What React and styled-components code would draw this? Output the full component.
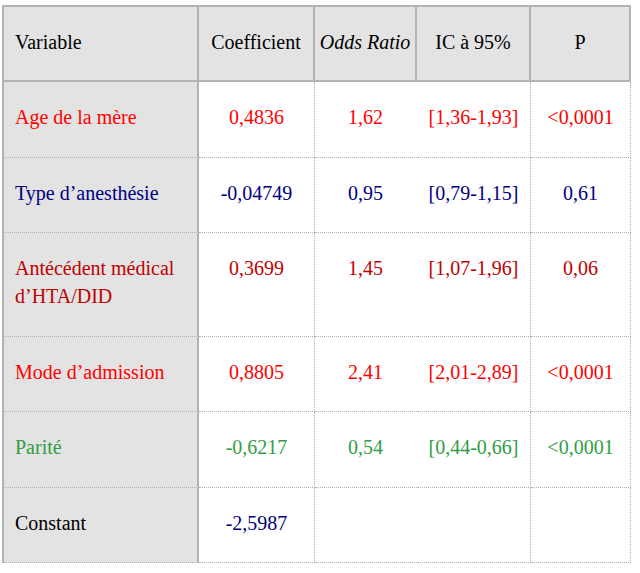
import React from "react";
import styled, { createGlobalStyle, css } from "styled-components";

const Global = createGlobalStyle`
  html, body { margin: 0; padding: 0; background: #ffffff; }
  body { font-family: "Liberation Serif", "Times New Roman", serif; }
`;

const Page = styled.div`
  padding: 5px 0 0 2px;
`;

const Table = styled.div`
  display: grid;
  grid-template-columns: 195px 116px 102px 114px 100px;
  width: max-content;
  border-top: 2px solid #b3b3b3;
  border-left: 2px solid #b3b3b3;
  font-family: "Liberation Serif", "Times New Roman", serif;
  font-size: 20px;
  line-height: 28px;
`;

const COLORS = {
  red: "#ff0000",
  navy: "#000080",
  darkred: "#c00000",
  green: "#2f9e44",
  black: "#000000",
};

const Cell = styled.div`
  box-sizing: border-box;
  color: ${(p) => COLORS[p.$tone] || "#000"};
  text-align: ${(p) => (p.$left ? "left" : "center")};
  padding: 21px 6px 25.5px ${(p) => (p.$left ? "11px" : "6px")};
  border-bottom: 1px dotted #b0b0b0;
  border-right: 1px dotted ${(p) => (p.$noRight ? "transparent" : "#b0b0b0")};
  background: #ffffff;
  white-space: nowrap;
  ${(p) =>
    p.$label &&
    css`
      background: #e3e3e3;
      border-right: 2px solid #b3b3b3;
      white-space: normal;
    `}
`;

const HeadCell = styled.div`
  box-sizing: border-box;
  background: #e3e3e3;
  color: #000;
  text-align: ${(p) => (p.$left ? "left" : "center")};
  font-style: ${(p) => (p.$italic ? "italic" : "normal")};
  padding: 21px 4px 24px ${(p) => (p.$left ? "11px" : "4px")};
  border-right: 2px solid #b3b3b3;
  border-bottom: 2px solid #b3b3b3;
  white-space: nowrap;
`;

const rows = [
  { label: "Age de la mère", tone: "red", v: ["0,4836", "1,62", "[1,36-1,93]", "<0,0001"] },
  { label: "Type d\u2019anesthésie", tone: "navy", v: ["-0,04749", "0,95", "[0,79-1,15]", "0,61"] },
  { label: ["Antécédent médical", "d\u2019HTA/DID"], tone: "darkred", v: ["0,3699", "1,45", "[1,07-1,96]", "0,06"] },
  { label: "Mode d\u2019admission", tone: "red", v: ["0,8805", "2,41", "[2,01-2,89]", "<0,0001"] },
  { label: "Parité", tone: "green", v: ["-0,6217", "0,54", "[0,44-0,66]", "<0,0001"] },
  { label: "Constant", tone: "black", v: ["-2,5987", "", "", ""], vTone: "navy" },
];

export default function App() {
  return (
    <>
      <Global />
      <Page>
        <Table>
          <HeadCell $left>Variable</HeadCell>
          <HeadCell>Coefficient</HeadCell>
          <HeadCell $italic>Odds Ratio</HeadCell>
          <HeadCell>IC à 95%</HeadCell>
          <HeadCell>P</HeadCell>
          {rows.map((r, i) => (
            <React.Fragment key={i}>
              <Cell $label $left $tone={r.tone}>
                {Array.isArray(r.label) ? (
                  <>
                    {r.label[0]}
                    <br />
                    {r.label[1]}
                  </>
                ) : (
                  r.label
                )}
              </Cell>
              {r.v.map((val, j) => (
                <Cell key={j} $tone={j === 0 && r.vTone ? r.vTone : r.tone} $noRight={j === 1}>
                  {val}
                </Cell>
              ))}
            </React.Fragment>
          ))}
        </Table>
      </Page>
    </>
  );
}
